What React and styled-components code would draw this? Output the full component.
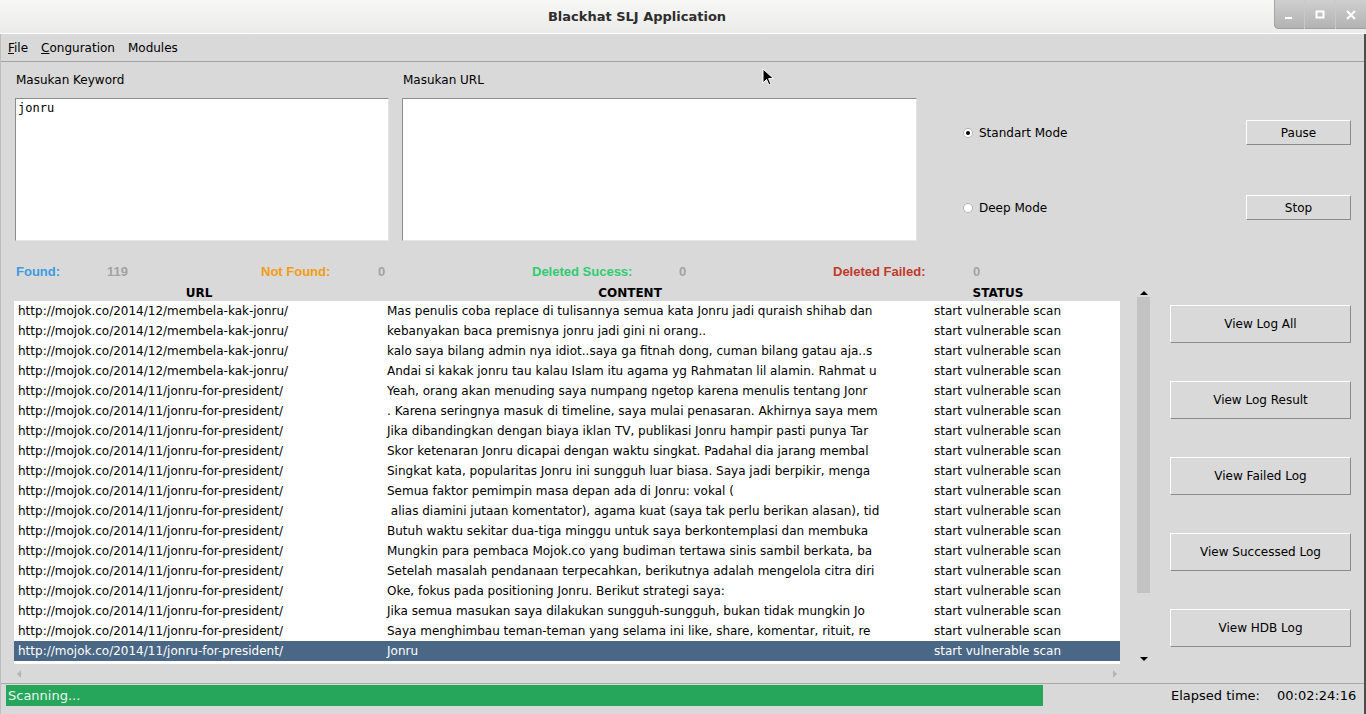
import React from "react"
import styled, { createGlobalStyle } from "styled-components"

const GlobalStyle = createGlobalStyle`
  html, body {
    margin: 0;
    padding: 0;
    background: #d9d9d9;
  }
  body {
    font-family: "DejaVu Sans", "Liberation Sans", sans-serif;
    font-size: 12px;
    color: #000;
  }
`

const Screen = styled.div`
  position: relative;
  width: 1366px;
  height: 714px;
  overflow: hidden;
  display: flex;
  flex-direction: column;
  background: #d9d9d9;
`

const TitleBar = styled.div`
  height: 33px;
  display: flex;
  border-bottom: 1px solid #ffffff;
  background: linear-gradient(#f7f7f5, #ebebe9);
`

const Title = styled.div`
  flex: 1;
  display: flex;
  align-items: center;
  justify-content: center;
  font-weight: bold;
  font-size: 13px;
  color: #2e2e2e;
  padding-bottom: 1px;
`

const Controls = styled.div`
  width: 92px;
  height: 29px;
  display: flex;
  border-bottom-left-radius: 5px;
  overflow: hidden;
  background: linear-gradient(#cfcfcf, #b2b2b2);
  box-shadow: inset 1px 0 0 #a5a5a5, inset 0 -1px 0 #a0a0a0;
`

const ControlBtn = styled.div`
  flex: 1;
  display: flex;
  align-items: center;
  justify-content: center;
  border-left: ${(p) => (p.first ? "none" : "1px solid #c9c9c9")};
`

const Body = styled.div`
  flex: 1;
  display: flex;
  flex-direction: column;
  border-right: 2px solid #4d4d4d;
  border-left: 1px solid #bdbdbd;
`

const MenuBar = styled.div`
  height: 27px;
  display: flex;
  align-items: center;
  gap: 1px;
  padding-left: 1px;
  border-bottom: 1px solid #a3a3a3;
`

const MenuItem = styled.span`
  padding: 0 6px;
  font-size: 12px;
  u {
    text-decoration: underline;
  }
`

const TopSection = styled.div`
  display: flex;
  padding: 11px 13px 0 14px;
`

const Field = styled.div`
  width: ${(p) => p.w}px;
  margin-left: ${(p) => p.ml || 0}px;
  display: flex;
  flex-direction: column;
`

const FieldLabel = styled.div`
  height: 14px;
  line-height: 14px;
  padding-left: 1px;
  margin-bottom: 11px;
`

const TextBox = styled.div`
  height: 137px;
  background: #ffffff;
  border-top: 1px solid #8c8c8c;
  border-left: 1px solid #8c8c8c;
  border-bottom: 1px solid #e4e4e4;
  border-right: 1px solid #e4e4e4;
  font-family: "DejaVu Sans Mono", "Liberation Mono", monospace;
  font-size: 12px;
  padding: 2px 2px;
  line-height: 14px;
`

const ModePanel = styled.div`
  flex: 1;
  margin-left: 46px;
  margin-top: 47px;
  display: grid;
  grid-template-columns: 1fr 105px;
  grid-template-rows: 25px 25px;
  row-gap: 50px;
`

const Radio = styled.label`
  display: flex;
  align-items: center;
  gap: 6px;
`

const RadioDot = styled.span`
  width: 10px;
  height: 10px;
  border-radius: 50%;
  background: #ffffff;
  box-shadow: inset 0 0 0 1px #b0b0b0;
  display: flex;
  align-items: center;
  justify-content: center;
  &::after {
    content: "";
    width: 4px;
    height: 4px;
    border-radius: 50%;
    background: ${(p) => (p.checked ? "#000" : "transparent")};
  }
`

const RaisedButton = styled.div`
  height: ${(p) => p.h || 25}px;
  box-sizing: border-box;
  display: flex;
  align-items: center;
  justify-content: center;
  background: #d9d9d9;
  border-top: 1px solid #ffffff;
  border-left: 1px solid #ffffff;
  border-bottom: 1px solid #8a8a8a;
  border-right: 1px solid #8a8a8a;
  font-size: 12px;
`

const Stats = styled.div`
  margin-top: 22px;
  padding-left: 15px;
  height: 16px;
  display: grid;
  grid-template-columns: 91px 154px 117px 154px 147px 154px 140px 1fr;
  align-items: center;
  font-family: "Liberation Sans", Arial, sans-serif;
  font-weight: bold;
  font-size: 13px;
`

const StatLabel = styled.span`
  color: ${(p) => p.color};
`

const StatValue = styled.span`
  color: #a3a3a3;
`

const TableSection = styled.div`
  margin-top: 7px;
  display: flex;
  padding-left: 13px;
  height: 397px;
`

const TableBlock = styled.div`
  width: 1106px;
  display: flex;
  flex-direction: column;
`

const HeaderRow = styled.div`
  height: 15px;
  display: grid;
  grid-template-columns: 370px 492px 1fr;
  font-weight: bold;
  line-height: 15px;
  text-align: center;
`

const TableBody = styled.div`
  height: 363px;
  background: #ffffff;
`

const Row = styled.div`
  height: 20px;
  display: grid;
  grid-template-columns: 369px 547px 1fr;
  align-items: center;
  background: ${(p) => (p.selected ? "#4a6785" : "transparent")};
  color: ${(p) => (p.selected ? "#ffffff" : "#000")};
`

const Cell = styled.span`
  padding-left: 4px;
  white-space: pre;
  overflow: hidden;
`

const HScroll = styled.div`
  height: 19px;
  display: flex;
  align-items: center;
  justify-content: space-between;
  padding: 0 3px 0 3px;
`

const ScrollCol = styled.div`
  width: 13px;
  margin-left: 17px;
  display: flex;
  flex-direction: column;
  align-items: center;
`

const Slider = styled.div`
  width: 13px;
  height: 296px;
  background: #c3c3c3;
`

const ArrowBox = styled.div`
  height: ${(p) => p.h}px;
  margin-top: ${(p) => p.mt || 0}px;
  display: flex;
  align-items: ${(p) => (p.down ? "flex-start" : "flex-end")};
  padding-bottom: ${(p) => (p.down ? 0 : 2)}px;
  box-sizing: border-box;
`

const SideButtons = styled.div`
  width: 181px;
  margin-left: 20px;
  padding-top: 19px;
  display: flex;
  flex-direction: column;
  gap: 38px;
`

const StatusBar = styled.div`
  border-top: 1px solid #a8a8a8;
  padding: 1px 0 0 5px;
  display: flex;
  align-items: flex-start;
  font-size: 13px;
`

const Progress = styled.div`
  width: 1035px;
  height: 21px;
  background: #e0e0e0;
`

const ProgressFill = styled.div`
  height: 100%;
  background: #26a65b;
  color: #eaf6ee;
  display: flex;
  align-items: center;
  padding-left: 2px;
  white-space: nowrap;
`

const Elapsed = styled.div`
  margin-left: 130px;
  height: 21px;
  display: flex;
  align-items: center;
  gap: 17px;
`

const Cursor = styled.svg`
  position: absolute;
  left: 762px;
  top: 68px;
`

const Tri = ({ dir, color = "#000", size = 4 }) => {
  const s = size
  const pts = {
    up: `0,${s} ${s},0 ${2 * s},${s}`,
    down: `0,0 ${2 * s},0 ${s},${s}`,
    left: `${s},0 ${s},${2 * s} 0,${s}`,
    right: `0,0 0,${2 * s} ${s},${s}`,
  }[dir]
  const w = dir === "up" || dir === "down" ? 2 * s : s
  const h = dir === "up" || dir === "down" ? s : 2 * s
  return (
    <svg width={w} height={h} viewBox={`0 0 ${w} ${h}`}>
      <polygon points={pts} fill={color} />
    </svg>
  )
}

const U1 = "http://mojok.co/2014/12/membela-kak-jonru/"
const U2 = "http://mojok.co/2014/11/jonru-for-president/"

const rows = [
  [U1, "Mas penulis coba replace di tulisannya semua kata Jonru jadi quraish shihab dan"],
  [U1, "kebanyakan baca premisnya jonru jadi gini ni orang.."],
  [U1, "kalo saya bilang admin nya idiot..saya ga fitnah dong, cuman bilang gatau aja..s"],
  [U1, "Andai si kakak jonru tau kalau Islam itu agama yg Rahmatan lil alamin. Rahmat u"],
  [U2, "Yeah, orang akan menuding saya numpang ngetop karena menulis tentang Jonr"],
  [U2, ". Karena seringnya masuk di timeline, saya mulai penasaran. Akhirnya saya mem"],
  [U2, "Jika dibandingkan dengan biaya iklan TV, publikasi Jonru hampir pasti punya Tar"],
  [U2, "Skor ketenaran Jonru dicapai dengan waktu singkat. Padahal dia jarang membal"],
  [U2, "Singkat kata, popularitas Jonru ini sungguh luar biasa. Saya jadi berpikir, menga"],
  [U2, "Semua faktor pemimpin masa depan ada di Jonru: vokal ("],
  [U2, " alias diamini jutaan komentator), agama kuat (saya tak perlu berikan alasan), tid"],
  [U2, "Butuh waktu sekitar dua-tiga minggu untuk saya berkontemplasi dan membuka"],
  [U2, "Mungkin para pembaca Mojok.co yang budiman tertawa sinis sambil berkata, ba"],
  [U2, "Setelah masalah pendanaan terpecahkan, berikutnya adalah mengelola citra diri"],
  [U2, "Oke, fokus pada positioning Jonru. Berikut strategi saya:"],
  [U2, "Jika semua masukan saya dilakukan sungguh-sungguh, bukan tidak mungkin Jo"],
  [U2, "Saya menghimbau teman-teman yang selama ini like, share, komentar, rituit, re"],
  [U2, "Jonru"],
]

const stats = [
  ["Found:", "119", "#3d9be0"],
  ["Not Found:", "0", "#f39c12"],
  ["Deleted Sucess:", "0", "#2ecc71"],
  ["Deleted Failed:", "0", "#c0392b"],
]

const logButtons = ["View Log All", "View Log Result", "View Failed Log", "View Successed Log", "View HDB Log"]

const App = () => {
  const selected = rows.length - 1
  const progress = 100

  return (
    <Screen>
      <GlobalStyle />
      <TitleBar>
        <Title>Blackhat SLJ Application</Title>
        <Controls>
          <ControlBtn first>
            <svg width="10" height="10" viewBox="0 0 10 10">
              <rect x="1" y="7" width="7" height="2" fill="#fff" />
            </svg>
          </ControlBtn>
          <ControlBtn>
            <svg width="10" height="10" viewBox="0 0 10 10">
              <rect x="1.5" y="1.5" width="7" height="6" fill="none" stroke="#fff" strokeWidth="2" />
            </svg>
          </ControlBtn>
          <ControlBtn>
            <svg width="10" height="10" viewBox="0 0 10 10">
              <path d="M1 1 L9 9 M9 1 L1 9" stroke="#fff" strokeWidth="2" />
            </svg>
          </ControlBtn>
        </Controls>
      </TitleBar>

      <Body>
        <MenuBar>
          <MenuItem><u>F</u>ile</MenuItem>
          <MenuItem><u>C</u>onguration</MenuItem>
          <MenuItem>Modules</MenuItem>
        </MenuBar>

        <TopSection>
          <Field w={374}>
            <FieldLabel>Masukan Keyword</FieldLabel>
            <TextBox>jonru</TextBox>
          </Field>
          <Field w={515} ml={13}>
            <FieldLabel>Masukan URL</FieldLabel>
            <TextBox />
          </Field>
          <ModePanel>
            <Radio><RadioDot checked />Standart Mode</Radio>
            <RaisedButton>Pause</RaisedButton>
            <Radio><RadioDot />Deep Mode</Radio>
            <RaisedButton>Stop</RaisedButton>
          </ModePanel>
        </TopSection>

        <Stats>
          {stats.map(([label, value, color]) => (
            <React.Fragment key={label}>
              <StatLabel color={color}>{label}</StatLabel>
              <StatValue>{value}</StatValue>
            </React.Fragment>
          ))}
        </Stats>

        <TableSection>
          <TableBlock>
            <HeaderRow>
              <span>URL</span>
              <span>CONTENT</span>
              <span>STATUS</span>
            </HeaderRow>
            <TableBody>
              {rows.map(([url, content], i) => (
                <Row key={i} selected={i === selected}>
                  <Cell>{url}</Cell>
                  <Cell>{content}</Cell>
                  <Cell>start vulnerable scan</Cell>
                </Row>
              ))}
            </TableBody>
            <HScroll>
              <Tri dir="left" color="#b5b5b5" />
              <Tri dir="right" color="#b5b5b5" />
            </HScroll>
          </TableBlock>

          <ScrollCol>
            <ArrowBox h={11}><Tri dir="up" /></ArrowBox>
            <Slider />
            <ArrowBox h={10} mt={64} down><Tri dir="down" /></ArrowBox>
          </ScrollCol>

          <SideButtons>
            {logButtons.map((b) => (
              <RaisedButton key={b} h={38}>{b}</RaisedButton>
            ))}
          </SideButtons>
        </TableSection>

        <StatusBar>
          <Progress>
            <ProgressFill style={{ width: `${progress}%` }}>Scanning...</ProgressFill>
          </Progress>
          <Elapsed>
            <span>Elapsed time:</span>
            <span>00:02:24:16</span>
          </Elapsed>
        </StatusBar>
      </Body>

      <Cursor width="14" height="20" viewBox="0 0 14 20">
        <path d="M1 1 L1 15 L4.5 11.5 L7 17 L9 16 L6.6 10.6 L11.5 10.6 Z" fill="#000" stroke="#fff" strokeWidth="1" />
      </Cursor>
    </Screen>
  )
}

export default App
